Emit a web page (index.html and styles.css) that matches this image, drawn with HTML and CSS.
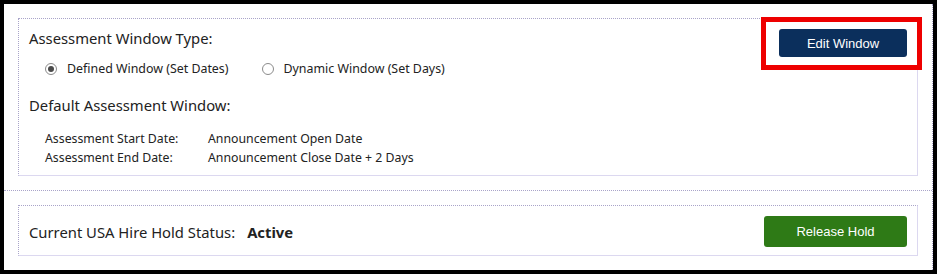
FILE: index.html
```html
<!DOCTYPE html>
<html>
<head>
<meta charset="utf-8">
<link rel="stylesheet" href="styles.css">
</head>
<body>
<div class="frame">
  <div class="section">
    <div class="panel panel-window">
      <div class="panel-main">
        <div class="title">Assessment Window Type:</div>
        <div class="radios">
          <label class="radio"><span class="dot checked"></span>Defined Window (Set Dates)</label>
          <label class="radio"><span class="dot"></span>Dynamic Window (Set Days)</label>
        </div>
        <div class="title title-2">Default Assessment Window:</div>
        <div class="dates">
          <div class="date-row"><span class="date-label">Assessment Start Date:</span><span>Announcement Open Date</span></div>
          <div class="date-row"><span class="date-label">Assessment End Date:</span><span>Announcement Close Date + 2 Days</span></div>
        </div>
      </div>
      <div class="btn-wrap">
        <button class="btn btn-navy">Edit Window</button>
        <span class="highlight"></span>
      </div>
    </div>
  </div>
  <div class="section section-2">
    <div class="panel panel-hold">
      <div class="status">Current USA Hire Hold Status:<b class="status-value">Active</b></div>
      <button class="btn btn-green">Release Hold</button>
    </div>
  </div>
</div>
</body>
</html>
```

FILE: styles.css
```css
html, body {
  margin: 0;
  padding: 0;
  background: #000;
}
body {
  width: 937px;
  height: 274px;
  overflow: hidden;
  font-family: "Noto Sans", "Open Sans", sans-serif;
  color: #222;
}
.frame {
  margin: 4px 0 0 4px;
  width: 928px;
  height: 266px;
  background: #fff;
  border-right: 1px dotted #a9a4c9;
}
.section {
  padding: 14px 14px 14px 14px;
  border-bottom: 1px dotted #a9a4c9;
}
.section-2 {
  border-bottom: none;
}
.panel {
  display: flex;
  justify-content: space-between;
  border-top: 1px dotted #a9a4c9;
  border-left: 1px dotted #a9a4c9;
  border-right: 1px solid #dcd8f0;
  border-bottom: 1px solid #dcd8f0;
}
.panel-window {
  align-items: flex-start;
  padding: 9px 10px 8px 10px;
}
.title {
  font-size: 14.8px;
  line-height: 20px;
}
.title-2 {
  margin-top: 16px;
}
.radios {
  display: flex;
  margin: 11px 0 0 16px;
  gap: 33px;
  font-size: 12.4px;
  line-height: 20px;
}
.radio {
  display: flex;
  align-items: center;
  gap: 10px;
}
.dot {
  width: 10px;
  height: 10px;
  border: 1px solid #8b8b8b;
  border-radius: 50%;
  display: flex;
  align-items: center;
  justify-content: center;
  background: #fff;
}
.dot.checked::after {
  content: "";
  width: 6px;
  height: 6px;
  border-radius: 50%;
  background: #4a4a4a;
}
.dates {
  margin: 14px 0 0 16px;
  font-size: 12.3px;
  line-height: 19px;
}
.date-row {
  display: flex;
}
.date-label {
  width: 163px;
}
.btn-wrap {
  position: relative;
  margin-top: 1px;
}
.btn {
  border: none;
  color: #fff;
  font-family: "Liberation Sans", Arial, sans-serif;
  font-size: 13px;
  border-radius: 3px;
  padding: 0;
  display: block;
}
.btn-navy {
  width: 128px;
  height: 28px;
  background: #0b2f5c;
}
.btn-green {
  width: 143px;
  height: 31px;
  background: #2e7a16;
}
.highlight {
  position: absolute;
  left: -18px;
  top: -12px;
  right: -15px;
  bottom: -13px;
  border: 5px solid #ee0000;
}
.panel-hold {
  align-items: center;
  padding: 10px 10px 8px 10px;
}
.status {
  font-size: 14.8px;
  line-height: 20px;
}
.status-value {
  margin-left: 12px;
}
```
